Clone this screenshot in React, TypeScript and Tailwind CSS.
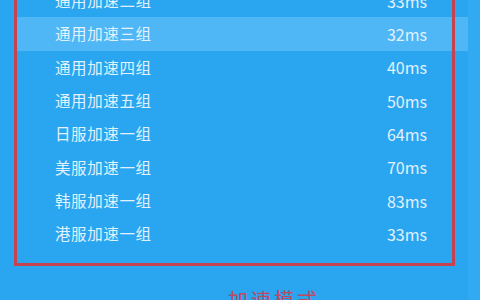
const routes = [
  { name: "通用加速二组", ping: "33ms" },
  { name: "通用加速三组", ping: "32ms", active: true },
  { name: "通用加速四组", ping: "40ms" },
  { name: "通用加速五组", ping: "50ms" },
  { name: "日服加速一组", ping: "64ms" },
  { name: "美服加速一组", ping: "70ms" },
  { name: "韩服加速一组", ping: "83ms" },
  { name: "港服加速一组", ping: "33ms" },
];

const RouteRow = ({
  name,
  ping,
  active,
}: {
  name: string;
  ping: string;
  active?: boolean;
}) => (
  <div
    className={
      active
        ? "flex h-[33.33px] items-center justify-between bg-[#4fb7f6] pl-[39px] pr-[41px]"
        : "flex h-[33.33px] items-center justify-between pl-[39px] pr-[41px]"
    }
  >
    <span className="text-[15.5px] tracking-[0.6px] text-[#e1f1fd]">{name}</span>
    <span className="text-[16px] text-[#e1f1fd]">{ping}</span>
  </div>
);

export default function App() {
  return (
    <div
      className="relative flex h-[300px] w-[480px] overflow-hidden bg-[#31aaf2]"
      style={{ fontFamily: '"Noto Sans CJK SC", "Noto Sans", sans-serif' }}
    >
      <div className="flex w-[468px] flex-col bg-[#2aa6f0]">
        <div className="-mt-[16px] ml-[16px] flex flex-col">
          {routes.map((r) => (
            <RouteRow key={r.name + r.ping} {...r} />
          ))}
        </div>
        <div className="mt-[39px] pl-[228px] text-[20px] leading-none tracking-[3px] text-[#bf4863]">
          加速模式
        </div>
      </div>

      {/* red annotation frame */}
      <div className="pointer-events-none absolute -top-[10px] bottom-[34px] left-[14px] right-[25px] border-[3px] border-[#c5434f]" />
    </div>
  );
}
